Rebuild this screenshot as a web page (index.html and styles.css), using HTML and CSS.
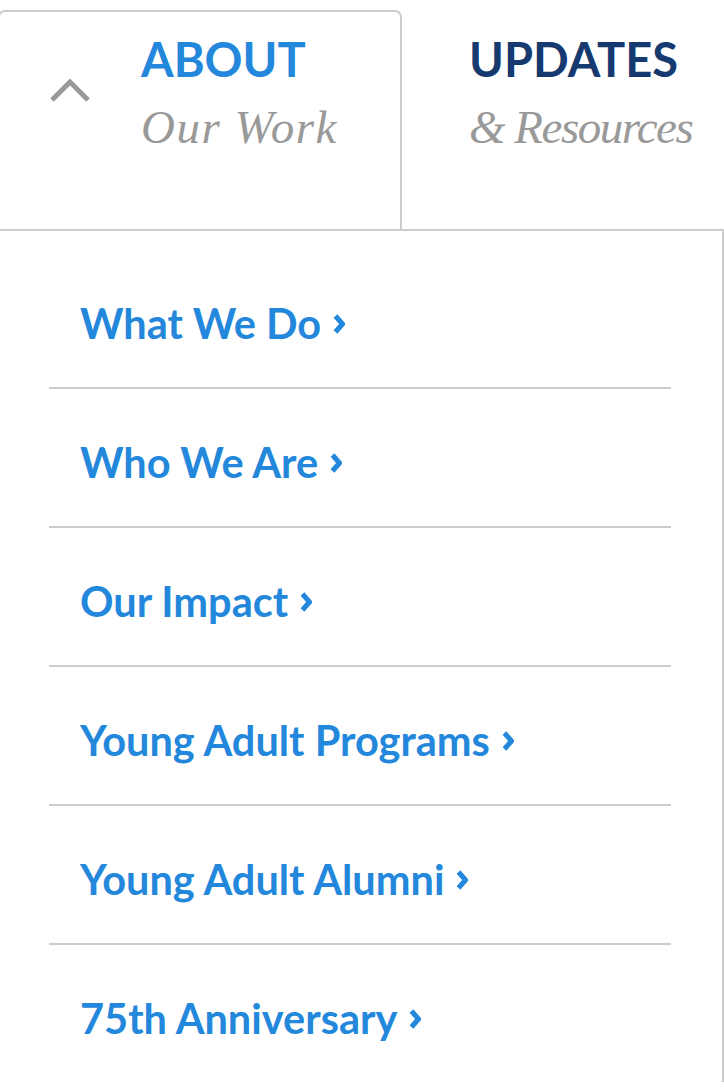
FILE: index.html
```html
<!DOCTYPE html>
<html lang="en">
<head>
<meta charset="utf-8">
<title>About menu</title>
<link rel="stylesheet" href="styles.css">
</head>
<body>
<nav class="nav">
  <div class="tabs">
    <div class="tab tab-active">
      <svg class="tab-chevron" width="44" height="28" viewBox="0 0 44 28" aria-hidden="true">
        <path d="M4 24 L22 6 L40 24" fill="none" stroke="#999999" stroke-width="5"/>
      </svg>
      <div class="tab-text">
        <div class="tab-title tab-title-active">ABOUT</div>
        <div class="tab-sub tab-sub-work">Our Work</div>
      </div>
    </div>
    <div class="tab tab-other">
      <div class="tab-text">
        <div class="tab-title tab-title-other">UPDATES</div>
        <div class="tab-sub tab-sub-res">&amp; Resources</div>
      </div>
    </div>
  </div>
  <div class="panel">
    <ul class="menu">
      <li class="menu-item"><a class="menu-link" href="#">What We Do<svg class="arrow" width="12" height="20" viewBox="0 0 12 20" aria-hidden="true"><path d="M2.5 2 L9.5 10 L2.5 18" fill="none" stroke="currentColor" stroke-width="5"/></svg></a></li>
      <li class="menu-item"><a class="menu-link" href="#">Who We Are<svg class="arrow" width="12" height="20" viewBox="0 0 12 20" aria-hidden="true"><path d="M2.5 2 L9.5 10 L2.5 18" fill="none" stroke="currentColor" stroke-width="5"/></svg></a></li>
      <li class="menu-item"><a class="menu-link" href="#">Our Impact<svg class="arrow" width="12" height="20" viewBox="0 0 12 20" aria-hidden="true"><path d="M2.5 2 L9.5 10 L2.5 18" fill="none" stroke="currentColor" stroke-width="5"/></svg></a></li>
      <li class="menu-item"><a class="menu-link" href="#">Young Adult Programs<svg class="arrow" width="12" height="20" viewBox="0 0 12 20" aria-hidden="true"><path d="M2.5 2 L9.5 10 L2.5 18" fill="none" stroke="currentColor" stroke-width="5"/></svg></a></li>
      <li class="menu-item"><a class="menu-link" href="#">Young Adult Alumni<svg class="arrow" width="12" height="20" viewBox="0 0 12 20" aria-hidden="true"><path d="M2.5 2 L9.5 10 L2.5 18" fill="none" stroke="currentColor" stroke-width="5"/></svg></a></li>
      <li class="menu-item"><a class="menu-link" href="#">75th Anniversary<svg class="arrow" width="12" height="20" viewBox="0 0 12 20" aria-hidden="true"><path d="M2.5 2 L9.5 10 L2.5 18" fill="none" stroke="currentColor" stroke-width="5"/></svg></a></li>
    </ul>
  </div>
</nav>
</body>
</html>
```

FILE: styles.css
```css
html, body {
  margin: 0;
  padding: 0;
  background: #ffffff;
  overflow: hidden;
}

body {
  font-family: "Lato", "Liberation Sans", sans-serif;
}

.nav {
  width: 726px;
  margin-left: -2px;
  padding-top: 10px;
}

.tabs {
  display: grid;
  grid-template-columns: 404px 1fr;
  height: 219px;
}

.tab {
  display: flex;
  align-items: flex-start;
  box-sizing: border-box;
  padding-top: 19px;
}

.tab-active {
  border: 2px solid #cccccc;
  border-bottom: none;
  border-radius: 7px 7px 0 0;
  padding-left: 48px;
}

.tab-other {
  padding-top: 21px;
  padding-left: 67px;
}

.tab-chevron {
  display: block;
  margin-top: 45px;
  flex: none;
}

.tab-text {
  display: flex;
  flex-direction: column;
}

.tab-active .tab-text {
  margin-left: 49px;
}

.tab-title {
  font-family: "Lato", "Liberation Sans", sans-serif;
  font-weight: 700;
  font-size: 47px;
  line-height: 56px;
}

.tab-title-active {
  color: #2387db;
}

.tab-title-other {
  color: #163a70;
}

.tab-sub {
  margin-top: 12px;
  font-family: "Liberation Serif", "Times New Roman", serif;
  font-style: italic;
  font-size: 47px;
  line-height: 56px;
  color: #999999;
}

.tab-sub-work {
  letter-spacing: 1.5px;
}

.tab-sub-res {
  letter-spacing: -1.5px;
}

.panel {
  border: 2px solid #cccccc;
  border-bottom: none;
  padding-top: 19px;
}

.menu {
  list-style: none;
  margin: 0 51px 0 49px;
  padding: 0;
}

.menu-item {
  border-bottom: 2px solid #cccccc;
}

.menu-item:last-child {
  border-bottom: none;
}

.menu-link {
  display: block;
  padding: 49px 30px 40px 31px;
  font-family: "Lato", "Liberation Sans", sans-serif;
  font-weight: 700;
  font-size: 41.5px;
  line-height: 48px;
  color: #2387db;
  text-decoration: none;
}

.arrow {
  display: inline-block;
  margin-left: 12px;
  vertical-align: 5px;
}
```
